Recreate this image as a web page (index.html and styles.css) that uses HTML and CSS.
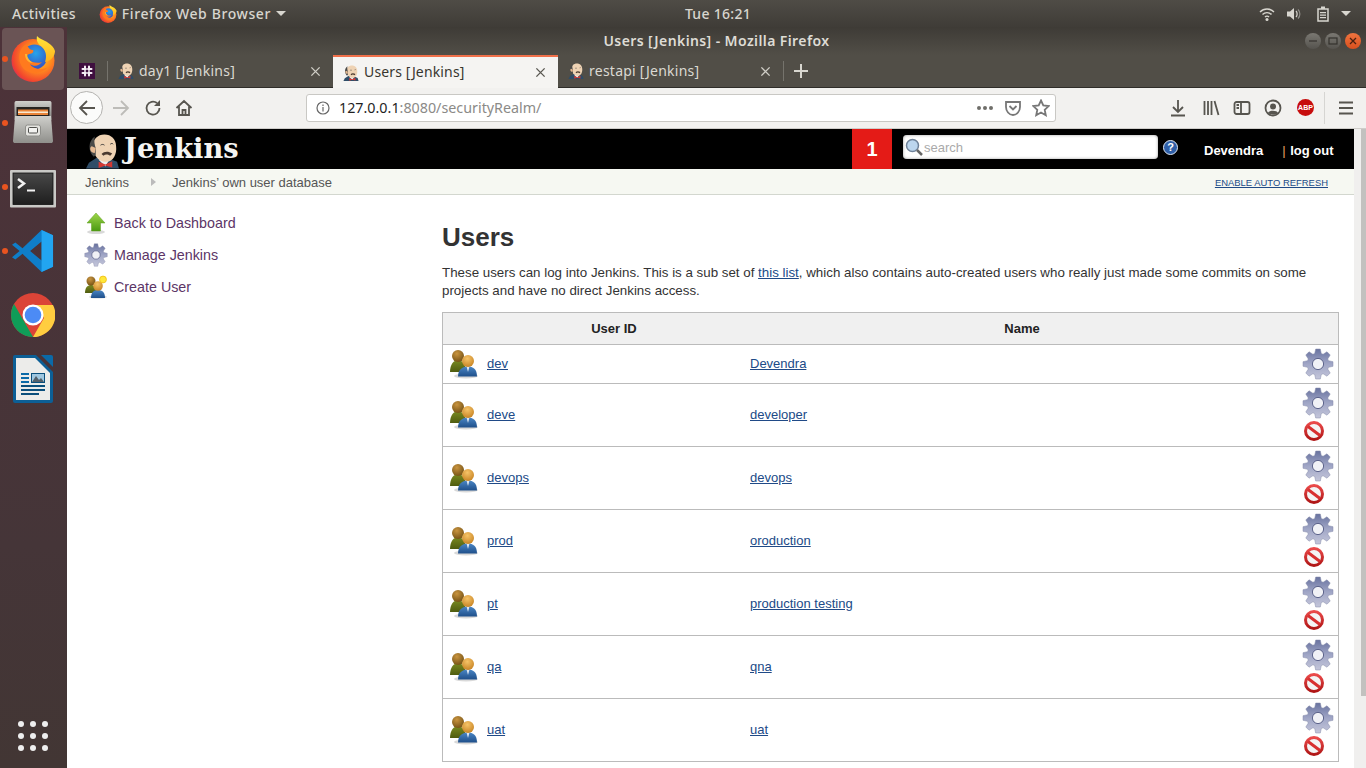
FILE: index.html
```html
<!DOCTYPE html>
<html lang="en">
<head>
<meta charset="utf-8">
<title>Users [Jenkins] - Mozilla Firefox</title>
<link rel="stylesheet" href="styles.css">
</head>
<body>
<svg class="defs" width="0" height="0" aria-hidden="true">
  <defs>
    <linearGradient id="gGear" x1="0" y1="0" x2="0" y2="1"><stop offset="0" stop-color="#68729f"/><stop offset=".5" stop-color="#a0a6c6"/><stop offset="1" stop-color="#c4c6da"/></linearGradient>
    <radialGradient id="gHeadB" cx=".4" cy=".3" r=".8"><stop offset="0" stop-color="#c9943f"/><stop offset="1" stop-color="#6d4c12"/></radialGradient>
    <radialGradient id="gHeadF" cx=".45" cy=".3" r=".8"><stop offset="0" stop-color="#f6c468"/><stop offset="1" stop-color="#c27c1c"/></radialGradient>
    <linearGradient id="gBlue" x1="0" y1="0" x2="0" y2="1"><stop offset="0" stop-color="#4a86c5"/><stop offset="1" stop-color="#1f4f8a"/></linearGradient>
    <linearGradient id="gOlive" x1="0" y1="0" x2="0" y2="1"><stop offset="0" stop-color="#7a8a20"/><stop offset="1" stop-color="#4f5c10"/></linearGradient>
    <linearGradient id="gArrow" x1="0" y1="0" x2="0" y2="1"><stop offset="0" stop-color="#9fd64a"/><stop offset="1" stop-color="#4b9a12"/></linearGradient>
    <linearGradient id="gStop" x1="0" y1="0" x2="0" y2="1"><stop offset="0" stop-color="#ea4a4a"/><stop offset="1" stop-color="#b01616"/></linearGradient>
    <radialGradient id="gFox" cx=".62" cy=".42" r=".72"><stop offset="0" stop-color="#ffd02a"/><stop offset=".45" stop-color="#ff8a1e"/><stop offset=".8" stop-color="#f2452e"/><stop offset="1" stop-color="#d0226a"/></radialGradient>
    <linearGradient id="gFlame" x1="0" y1="0" x2="0" y2="1"><stop offset="0" stop-color="#ffe53a"/><stop offset="1" stop-color="#ffb21c"/></linearGradient>
    <radialGradient id="gGlobe" cx=".55" cy=".35" r=".8"><stop offset="0" stop-color="#27a4ea"/><stop offset="1" stop-color="#3a3bb8"/></radialGradient>
    <linearGradient id="gCab" x1="0" y1="0" x2="0" y2="1"><stop offset="0" stop-color="#cfcfcb"/><stop offset="1" stop-color="#8f8f8b"/></linearGradient>
    <linearGradient id="gTop" x1="0" y1="0" x2="0" y2="1"><stop offset="0" stop-color="#cfcfcb"/><stop offset="1" stop-color="#7f7f7b"/></linearGradient>
    <linearGradient id="gTerm" x1="0" y1="0" x2="0" y2="1"><stop offset="0" stop-color="#484848"/><stop offset="1" stop-color="#1e1e1e"/></linearGradient>

    <symbol id="gear" viewBox="0 0 32 32">
      <path fill="url(#gGear)" stroke="#858aa8" stroke-width=".5" d="M12.7 5.5L13.7 1H18.3L19.3 5.5L21.09 6.25L24.97 3.77L28.23 7.03L25.75 10.91L26.5 12.7L31 13.7V18.3L26.5 19.3L25.75 21.09L28.23 24.97L24.97 28.23L21.09 25.75L19.3 26.5L18.3 31H13.7L12.7 26.5L10.91 25.75L7.03 28.23L3.77 24.97L6.25 21.09L5.5 19.3L1 18.3V13.7L5.5 12.7L6.25 10.91L3.77 7.03L7.03 3.77L10.91 6.25Z"/>
      <circle cx="16" cy="16" r="5.6" fill="#f0f1f6" stroke="#5d648c" stroke-width="1"/>
    </symbol>
    <symbol id="users" viewBox="0 0 32 32">
      <ellipse cx="18" cy="28" rx="12" ry="2.4" fill="#000" opacity=".15"/>
      <path fill="url(#gOlive)" d="M2 24C2 16 6 12 10 12C14 12 18 16 18 24Z"/>
      <circle cx="10" cy="8" r="6" fill="url(#gHeadB)"/>
      <path fill="url(#gBlue)" d="M10 28.500C10 21 15 18.500 20 18.500C25 18.500 29 21 29 28.500Z"/>
      <path fill="#dfe8f2" d="M18.500 18.500H21.500L20 24Z"/>
      <circle cx="20" cy="13" r="6" fill="url(#gHeadF)"/>
    </symbol>
    <symbol id="stop" viewBox="0 0 24 24">
      <circle cx="12" cy="12" r="8.500" fill="#f4f4f4" stroke="url(#gStop)" stroke-width="3"/>
      <path d="M6 7.500L18 16.500" stroke="#d83030" stroke-width="3"/>
    </symbol>
    <symbol id="arrowup" viewBox="0 0 24 24">
      <ellipse cx="12" cy="21" rx="9" ry="2" fill="#000" opacity=".15"/>
      <path fill="url(#gArrow)" stroke="#5f9e1e" stroke-width=".5" d="M12 2L21 12H16.5V20H7.5V12H3Z"/>
    </symbol>
    <symbol id="usernew" viewBox="0 0 24 24">
      <ellipse cx="14" cy="22" rx="9" ry="1.600" fill="#000" opacity=".15"/>
      <path fill="url(#gOlive)" d="M1 18C1 12 4 10 7 10C10 10 13 12 13 18Z"/>
      <circle cx="7" cy="6" r="4.500" fill="url(#gHeadB)"/>
      <path fill="url(#gBlue)" d="M7 23C7 17 10 15 14 15C18 15 21 17 21 23Z"/>
      <circle cx="14" cy="11" r="4.800" fill="url(#gHeadF)"/>
      <circle cx="19" cy="4.500" r="3.400" fill="#ffe83a" stroke="#f3c51e" stroke-width="1"/>
    </symbol>
    <symbol id="butler" viewBox="0 0 34 36">
      <path fill="#2f4d68" d="M0 36L3 30L11 25L24 26L32 29L34 36Z"/>
      <path fill="#eee" d="M13 27L20 34L24 27Z"/>
      <path fill="#d33833" d="M13 29L20 32L27 28.500L27 35L20 33L13 35.500Z"/>
      <path fill="#efd3b4" d="M7 13C7 6 12 1 19 1C26 1 31 6 31 13C32 21 28 29 21 29C15 29 11 26 9 21Z"/>
      <path fill="#4a4a48" d="M8 24C2 18 2 8 9 3C8 8 9 12 10 15L10 22Z"/>
      <path fill="#e5b992" d="M6 13C3 14 4 20 9 20L10 15Z"/>
      <path fill="none" stroke="#333" stroke-width="1" d="M15 12C16 11 18 11 19 12M25 11C26 10 27.500 10 28 11"/>
      <path fill="#4a3a30" d="M16 21C19 18 23 18 27 20.500L25 23C22 21 20 21 18 23Z"/>
    </symbol>
    <symbol id="firefox" viewBox="0 0 44 46">
      <circle cx="22" cy="24.500" r="21.500" fill="url(#gFox)"/>
      <circle cx="23.500" cy="21" r="12.500" fill="url(#gGlobe)"/>
      <path fill="url(#gFlame)" d="M26 0C25 5 27 8 31 11C35 15 36 20 34 26C40 25 44 20 44 15C42 8 34 5 30 3C28 2 27 1 26 0Z"/>
      <path fill="#ff7a1e" d="M16 8C13 9 10 12 9 16C7 22 9 30 14 34C21 39 31 38 37 31C31 35 22 33 19 28C23 31 28 30 31 26C26 28 21 26 17 24C15 22 16 19 18 18C22 18 23 15 22 14C19 14 17 12 16 8Z"/>
      <path fill="#ffb533" d="M14 18C14 24 18 27 22 27C19 25 16 22 16 18Z"/>
    </symbol>
    <symbol id="slack" viewBox="0 0 16 16">
      <rect width="16" height="16" fill="#3f0f3f"/>
      <path stroke="#f4eef4" stroke-width="2" stroke-linecap="round" fill="none" d="M6 3.500V7M10 9V12.500M3.500 10H7M9 6H12.500M10 3.500V7M6 9V12.500M3.500 6H7M9 10H12.500"/>
    </symbol>
  </defs>
</svg>

<div class="screen">
  <header class="topbar">
    <div class="topbar-left">
      <span class="top-label">Activities</span>
      <span class="top-app">
        <svg class="ic18"><use href="#firefox"/></svg>
        <span class="top-label top-label-wide">Firefox Web Browser</span>
        <span class="caret"></span>
      </span>
    </div>
    <div class="clock">Tue 16:21</div>
    <div class="tray">
      <svg class="tray-ic" viewBox="0 0 16 16"><path fill="none" stroke="#d8d6cf" stroke-width="1.400" d="M1 6C5 2 11 2 15 6M3.500 8.500C6 6 10 6 12.500 8.500M6 11C7 10 9 10 10 11"/><circle cx="8" cy="13.500" r="1.500" fill="#d8d6cf"/></svg>
      <svg class="tray-ic" viewBox="0 0 16 16"><path fill="#d8d6cf" d="M1 5.500H4L8 2V14L4 10.500H1Z"/><path fill="none" stroke="#d8d6cf" stroke-width="1.200" d="M10 5C11.500 6.500 11.500 9.500 10 11"/><path fill="none" stroke="#8f8d87" stroke-width="1.200" d="M12 3.500C14.500 6 14.500 10 12 12.500"/></svg>
      <svg class="tray-ic tray-batt" viewBox="0 0 16 16"><path fill="none" stroke="#d8d6cf" stroke-width="1.500" d="M3 3H13V15H3Z"/><path fill="#d8d6cf" d="M6 .5H10V3H6ZM5 6H11V7.200H5ZM5 8.500H11V9.700H5ZM5 11H11V12.200H5Z"/></svg>
      <span class="caret"></span>
    </div>
  </header>

  <div class="desk">
    <nav class="dock">
      <div class="dock-item dock-active"><span class="dot"></span>
        <svg class="ic-dock"><use href="#firefox"/></svg>
      </div>
      <div class="dock-item"><span class="dot"></span>
        <svg class="ic-dock" viewBox="0 0 44 46">
          <path fill="url(#gTop)" d="M3.500 3C3.500 2 4 1 5 1H39C40 1 40.500 2 40.500 3V20H3.500Z"/>
          <path fill="#262320" d="M5.500 7H38.500V18H5.500Z"/>
          <path fill="#e8843a" d="M7 9.500H37V15H7Z"/><path fill="#f8e8d0" d="M7 11.500H37V13H7Z"/>
          <path fill="url(#gCab)" d="M4 16H40L42 41C42 42.500 41 43 40 43H4C3 43 2 42.500 2 41Z"/>
          <rect x="14.500" y="25" width="15" height="11" rx="2" fill="#e4e4e0" stroke="#8f8f8b"/><rect x="17.500" y="27.500" width="9" height="5.500" rx="1" fill="#f2f2f0" stroke="#4f4f4c"/>
        </svg>
      </div>
      <div class="dock-item"><span class="dot"></span>
        <svg class="ic-term" viewBox="0 0 46 38">
          <rect x="0" y="0" width="46" height="37.500" rx="1" fill="#c9c9c6"/><rect x="3" y="3" width="40" height="31.500" fill="url(#gTerm)" stroke="#111" stroke-width=".8"/>
          <path fill="none" stroke="#f2f2f2" stroke-width="2.500" d="M8 9L14 13.500L8 18"/><path stroke="#f2f2f2" stroke-width="2" d="M17 20.500H25"/>
        </svg>
      </div>
      <div class="dock-item"><span class="dot"></span>
        <svg class="ic-code" viewBox="0 0 44 46">
          <path fill="#0f7ec9" d="M31 1L43 6.500V39.500L31 45L11 26L3.500 32L0 29.500L8 23L0 16.500L3.500 14L11 20ZM31 13L19 23L31 33Z"/>
          <path fill="#22a5f1" d="M31 1L43 6.500V39.500L31 45Z"/>
        </svg>
      </div>
      <div class="dock-item">
        <svg class="ic-dock" viewBox="0 0 44 46">
          <g transform="translate(0 1)">
          <circle cx="22" cy="22" r="22" fill="#db4437"/>
          <path fill="#0f9d58" d="M22 44A22 22 0 0 1 3 11L14 30L22 44Z"/>
          <path fill="#ffcd40" d="M22 44L33 25L22 12H42A22 22 0 0 1 22 44Z"/>
          <circle cx="22" cy="22" r="10.500" fill="#fff"/><circle cx="22" cy="22" r="8.300" fill="#4c8bf5"/>
          </g>
        </svg>
      </div>
      <div class="dock-item">
        <svg class="ic-writer" viewBox="0 0 40 48">
          <path fill="#0b6aa8" d="M28 0H38A2 2 0 0 1 40 2V12Z"/>
          <path fill="#0c5f96" d="M2 0H23L40 17V46A2 2 0 0 1 38 48H2A2 2 0 0 1 0 46V2A2 2 0 0 1 2 0Z"/>
          <path fill="#ececea" d="M3 3H22L37 18V45H3Z"/>
          <path fill="#0b6aa8" d="M8 18H16V20H8ZM8 22H16V24H8ZM8 26H16V28H8Z"/>
          <path fill="#0b4f7c" d="M8 30H32V32H8ZM8 34H32V36H8ZM8 38H26V40H8Z"/>
          <rect x="18" y="18" width="14" height="10" fill="#0b4f7c"/><rect x="19" y="19" width="12" height="8" fill="#9fc7e0"/><path fill="#54606a" d="M19 27L23 21L26 25L28 23L31 27Z"/>
        </svg>
      </div>
      <div class="apps">
        <i></i><i></i><i></i><i></i><i></i><i></i><i></i><i></i><i></i>
      </div>
    </nav>

    <main class="window">
      <div class="titlebar">
        <span class="wintitle">Users [Jenkins] - Mozilla Firefox</span>
        <div class="winbtns">
          <span class="winbtn"><svg viewBox="0 0 16 16"><path stroke="#34322e" stroke-width="1.200" d="M4 8H12"/></svg></span>
          <span class="winbtn"><svg viewBox="0 0 16 16"><rect x="4" y="5" width="8" height="6" fill="none" stroke="#34322e" stroke-width="1.200"/></svg></span>
          <span class="winbtn winbtn-close"><svg viewBox="0 0 16 16"><path stroke="#4a2010" stroke-width="1.300" d="M5 5L11 11M11 5L5 11"/></svg></span>
        </div>
      </div>

      <div class="tabbar">
        <span class="pinned"><svg class="ic16"><use href="#slack"/></svg></span>
        <span class="tabsep"></span>
        <div class="tab">
          <svg class="ic16"><use href="#butler"/></svg>
          <span class="tab-text">day1 [Jenkins]</span>
          <svg class="tab-x" viewBox="0 0 12 12"><path d="M1.500 1.500L10.500 10.500M10.500 1.500L1.500 10.500"/></svg>
        </div>
        <div class="tab tab-active">
          <svg class="ic16"><use href="#butler"/></svg>
          <span class="tab-text">Users [Jenkins]</span>
          <svg class="tab-x" viewBox="0 0 12 12"><path d="M1.500 1.500L10.500 10.500M10.500 1.500L1.500 10.500"/></svg>
        </div>
        <div class="tab">
          <svg class="ic16"><use href="#butler"/></svg>
          <span class="tab-text">restapi [Jenkins]</span>
          <svg class="tab-x" viewBox="0 0 12 12"><path d="M1.500 1.500L10.500 10.500M10.500 1.500L1.500 10.500"/></svg>
        </div>
        <span class="tabsep"></span>
        <svg class="tab-plus" viewBox="0 0 14 14"><path d="M7 0V14M0 7H14"/></svg>
      </div>

      <div class="navbar">
        <span class="backbtn"><svg class="nav-ic" viewBox="0 0 18 18"><path d="M17 9H2M9 2L2 9L9 16"/></svg></span>
        <svg class="nav-ic nav-fwd" viewBox="0 0 18 18"><path d="M1 9H16M9 2L16 9L9 16"/></svg>
        <svg class="nav-ic nav-reload" viewBox="0 0 18 18"><path d="M15.500 9A6.500 6.500 0 1 1 13 4"/><path class="solid" d="M16 1V7H10Z"/></svg>
        <svg class="nav-ic nav-home" viewBox="0 0 18 18"><path d="M1.500 9L9 2L16.500 9M4 7.500V16H14V7.500M7.500 16V11H10.500V16"/></svg>
        <div class="urlbar">
          <svg class="url-info" viewBox="0 0 14 14"><circle cx="7" cy="7" r="6"/><path d="M7 6V10.500M7 3.500V5"/></svg>
          <span class="url"><span class="url-host">127.0.0.1</span>:8080/securityRealm/</span>
          <span class="url-dots"><i></i><i></i><i></i></span>
          <svg class="nav-ic url-pocket" viewBox="0 0 18 18"><path d="M2 3H16V8C16 12 13 16 9 16C5 16 2 12 2 8ZM5.500 7L9 10.500L12.500 7"/></svg>
          <svg class="nav-ic url-star" viewBox="0 0 18 18"><path d="M9 1.500L11.300 6.500L16.700 7.100L12.700 10.800L13.800 16.200L9 13.500L4.200 16.200L5.300 10.800L1.300 7.100L6.700 6.500Z"/></svg>
        </div>
        <svg class="nav-ic tool-dl" viewBox="0 0 18 18"><path d="M9 1V12M4 8L9 13L14 8M2 16.500H16"/></svg>
        <svg class="nav-ic tool" viewBox="0 0 18 18"><path d="M2.500 2V16M6 2V16M9.500 2V16M12.500 2L16.500 16"/></svg>
        <svg class="nav-ic tool" viewBox="0 0 18 18"><rect x="1.500" y="3" width="15" height="12" rx="2"/><path d="M8 3V15M3.500 6H6M3.500 9H6"/></svg>
        <svg class="nav-ic tool" viewBox="0 0 18 18"><circle cx="9" cy="9" r="7.500"/><circle class="solid" cx="9" cy="7.500" r="3"/><path class="solid" d="M4 14C5 11 13 11 14 14C12 16 6 16 4 14Z"/></svg>
        <span class="abp">ABP</span>
        <span class="toolsep"></span>
        <svg class="nav-ic tool-menu" viewBox="0 0 18 18"><path d="M2 3.500H16M2 9H16M2 14.500H16"/></svg>
      </div>

      <div class="viewport">
        <div class="page">
          <div class="jk-header">
            <div class="jk-logo">
              <svg class="jk-butler"><use href="#butler"/></svg>
              <span class="jk-word">Jenkins</span>
            </div>
            <span class="jk-badge">1</span>
            <div class="jk-search">
              <svg class="jk-mag" viewBox="0 0 18 18"><circle cx="7.500" cy="7.500" r="6" fill="#bcd6ee" stroke="#6f8299" stroke-width="1.500"/><path stroke="#666" stroke-width="2.500" d="M12 12L17 17"/></svg>
              <input class="jk-input" type="text" placeholder="search">
            </div>
            <span class="jk-help">?</span>
            <span class="jk-user">Devendra</span>
            <span class="jk-logout"><span class="jk-pipe">|</span> log out</span>
          </div>
          <div class="crumbs">
            <span>Jenkins</span>
            <span class="crumb-arrow"></span>
            <span>Jenkins’ own user database</span>
            <a class="autorefresh" href="#">ENABLE AUTO REFRESH</a>
          </div>
          <div class="content">
            <aside class="tasks">
              <a class="task" href="#"><svg class="ic24"><use href="#arrowup"/></svg>Back to Dashboard</a>
              <a class="task" href="#"><svg class="ic24"><use href="#gear"/></svg>Manage Jenkins</a>
              <a class="task" href="#"><svg class="ic24"><use href="#usernew"/></svg>Create User</a>
            </aside>
            <section class="main">
              <h1>Users</h1>
              <p>These users can log into Jenkins. This is a sub set of <a href="#">this list</a>, which also contains auto-created users who really just made some commits on some projects and have no direct Jenkins access.</p>
              <table class="users">
                <colgroup><col class="c1"><col class="c2"><col class="c3"><col class="c4"></colgroup>
                <thead><tr><th></th><th>User ID</th><th>Name</th><th></th></tr></thead>
                <tbody>
                  <tr><td class="ti"><svg class="ic32"><use href="#users"/></svg></td><td class="tu"><a href="#">dev</a></td><td class="tn"><a href="#">Devendra</a></td><td class="ta"><svg class="ic32"><use href="#gear"/></svg></td></tr>
                  <tr><td class="ti"><svg class="ic32"><use href="#users"/></svg></td><td class="tu"><a href="#">deve</a></td><td class="tn"><a href="#">developer</a></td><td class="ta"><svg class="ic32"><use href="#gear"/></svg><svg class="ic24"><use href="#stop"/></svg></td></tr>
                  <tr><td class="ti"><svg class="ic32"><use href="#users"/></svg></td><td class="tu"><a href="#">devops</a></td><td class="tn"><a href="#">devops</a></td><td class="ta"><svg class="ic32"><use href="#gear"/></svg><svg class="ic24"><use href="#stop"/></svg></td></tr>
                  <tr><td class="ti"><svg class="ic32"><use href="#users"/></svg></td><td class="tu"><a href="#">prod</a></td><td class="tn"><a href="#">oroduction</a></td><td class="ta"><svg class="ic32"><use href="#gear"/></svg><svg class="ic24"><use href="#stop"/></svg></td></tr>
                  <tr><td class="ti"><svg class="ic32"><use href="#users"/></svg></td><td class="tu"><a href="#">pt</a></td><td class="tn"><a href="#">production testing</a></td><td class="ta"><svg class="ic32"><use href="#gear"/></svg><svg class="ic24"><use href="#stop"/></svg></td></tr>
                  <tr><td class="ti"><svg class="ic32"><use href="#users"/></svg></td><td class="tu"><a href="#">qa</a></td><td class="tn"><a href="#">qna</a></td><td class="ta"><svg class="ic32"><use href="#gear"/></svg><svg class="ic24"><use href="#stop"/></svg></td></tr>
                  <tr><td class="ti"><svg class="ic32"><use href="#users"/></svg></td><td class="tu"><a href="#">uat</a></td><td class="tn"><a href="#">uat</a></td><td class="ta"><svg class="ic32"><use href="#gear"/></svg><svg class="ic24"><use href="#stop"/></svg></td></tr>
                </tbody>
              </table>
            </section>
          </div>
        </div>
        <div class="scrollbar"><div class="thumb"></div></div>
      </div>
    </main>
  </div>
</div>
</body>
</html>
```
FILE: styles.css
```css
* { box-sizing: border-box; }
html, body { margin: 0; height: 768px; overflow: hidden; }
body { font-family: "Liberation Sans", Arial, sans-serif; font-size: 13px; color: #333; }
.defs { display: block; height: 0; }
.screen { width: 1366px; height: 768px; display: flex; flex-direction: column; overflow: hidden; }

/* GNOME top bar */
.topbar { height: 27px; flex: none; display: grid; grid-template-columns: 1fr auto 1fr; align-items: center; padding: 0 6px 0 12px; background: linear-gradient(#4f4c46, #3f3c37); font-family: "Noto Sans", sans-serif; font-size: 14px; font-weight: 500; color: #d8d6cf; }
.topbar-left { display: flex; align-items: center; gap: 23px; }
.top-app { display: flex; align-items: center; gap: 5px; }
.top-label { letter-spacing: .35px; }
.top-label-wide { letter-spacing: .6px; }
.ic18 { width: 18px; height: 18px; }
.caret { display: inline-block; width: 0; height: 0; border: 5px solid transparent; border-top: 5px solid #d8d6cf; border-bottom: 0; margin-left: 0; }
.clock { letter-spacing: .3px; margin-left: 64px; }
.tray { display: flex; justify-content: flex-end; align-items: center; gap: 11px; padding-right: 9px; }
.tray-ic { width: 16px; height: 16px; }
.tray-batt { margin-left: 2px; }
.tray .caret { margin-left: -1px; }

.desk { flex: 1; display: flex; min-height: 0; }

/* Dock */
.dock { width: 67px; flex: none; display: flex; flex-direction: column; align-items: flex-start; background: linear-gradient(#4d3239, #453538 70%, #423634); padding: 1px 0 0 2px; position: relative; }
.dock-item { width: 62px; height: 64px; flex: none; display: flex; align-items: center; justify-content: center; position: relative; }
.dock-active { background: #6a5455; border-radius: 4px; height: 62px; margin-bottom: 1px; }
.dot { position: absolute; left: 0; top: 29px; width: 6px; height: 6px; border-radius: 50%; background: #e95420; }
.dock-active .dot { top: 28px; }
.ic-dock { width: 44px; height: 46px; }
.ic-term { width: 46px; height: 38px; margin-top: 3px; }
.ic-code { width: 42px; height: 44px; }
.ic-writer { width: 40px; height: 48px; }
.apps { margin: auto 0 17px 16px; display: grid; grid-template-columns: repeat(3, 6px); gap: 6px; }
.apps i { width: 6px; height: 6px; border-radius: 50%; background: #eee; }

/* Window */
.window { flex: 1; min-width: 0; display: flex; flex-direction: column; }
.titlebar { height: 28px; flex: none; display: flex; align-items: center; justify-content: center; position: relative; background: linear-gradient(#3e3b36, #514e47); }
.wintitle { font-family: "Noto Sans", sans-serif; font-size: 14px; font-weight: 600; letter-spacing: .4px; color: #dedcd5; margin-top: -2px; }
.winbtns { position: absolute; right: 5px; top: 6px; display: flex; gap: 4px; }
.winbtn { width: 16px; height: 16px; border-radius: 50%; background: linear-gradient(#7a7872, #55534e); display: block; }
.winbtn svg { display: block; width: 16px; height: 16px; }
.winbtn-close { background: linear-gradient(#f0743f, #d9501e); }

.tabbar { height: 33px; flex: none; display: flex; align-items: flex-end; background: #514e47; border-bottom: 1px solid #2f2d29; font-family: "Noto Sans", sans-serif; font-size: 14px; color: #dbd9d2; }
.pinned { width: 40px; height: 32px; padding-left: 12px; display: flex; align-items: center; flex: none; }
.ic16 { width: 16px; height: 16px; flex: none; display: block; }
.tabsep { width: 1px; height: 20px; background: #75736c; margin-bottom: 6px; flex: none; }
.tab { width: 225px; height: 32px; flex: none; display: flex; align-items: center; padding: 0 12px 0 10px; gap: 5px; }
.tab-text { flex: 1; white-space: nowrap; letter-spacing: .25px; margin-top: -2px; }
.tab-x { width: 11px; height: 11px; stroke: #cfcdc6; stroke-width: 1.500; fill: none; flex: none; }
.tab-active { height: 33px; margin-bottom: -1px; background: #f5f4f2; color: #38362f; border-top: 2px solid #f0704a; }
.tab-active .tab-text { margin-top: -2px; letter-spacing: .15px; }
.tab-active .tab-x { stroke: #5a5852; }
.tab-plus { width: 14px; height: 14px; margin: 0 0 9px 10px; stroke: #d8d6cf; stroke-width: 2; flex: none; }

.navbar { height: 41px; flex: none; display: flex; align-items: center; background: #f2f1ef; border-bottom: 1px solid #cfcdca; padding-left: 3px; padding-bottom: 1px; }
.nav-ic { width: 18px; height: 18px; fill: none; stroke: #57554f; stroke-width: 1.800; flex: none; }
.nav-ic .solid { fill: #57554f; stroke: none; }
.backbtn { width: 33px; height: 33px; border-radius: 50%; border: 1px solid #b4b3b0; background: #fbfbfa; display: flex; align-items: center; justify-content: center; flex: none; }
.nav-fwd { margin-left: 9px; stroke: #bdbcb8; }
.nav-reload { margin-left: 14px; }
.nav-home { margin-left: 13px; }
.urlbar { width: 750px; height: 28px; margin-left: 113px; flex: none; display: flex; align-items: center; background: #fff; border: 1px solid #c9c8c4; border-radius: 3px; padding: 0 5px 0 9px; }
.url-info { width: 14px; height: 14px; fill: none; stroke: #666; stroke-width: 1.200; flex: none; }
.url { margin-left: 9px; flex: 1; font-family: "Noto Sans", sans-serif; font-size: 14.300px; color: #8b8a87; white-space: nowrap; }
.url-host { color: #1f1f1f; }
.url-dots { display: flex; gap: 2px; margin-right: 11px; }
.url-dots i { width: 4px; height: 4px; border-radius: 50%; background: #6f6e6a; }
.url-pocket { margin-right: 10px; stroke: #777; }
.url-star { stroke: #777; }
.tool-dl { margin-left: 113px; }
.tool { margin-left: 13px; }
.tool-dl + .tool { margin-left: 15px; }
.abp { width: 17px; height: 17px; margin-left: 15px; border-radius: 50%; background: #c70d0d; color: #fff; font-size: 7px; font-weight: 700; line-height: 17px; text-align: center; flex: none; }
.toolsep { width: 1px; height: 32px; background: #d6d5d2; margin-left: 10px; flex: none; }
.tool-menu { margin-left: 12px; }

.viewport { flex: 1; min-height: 0; display: flex; background: #fff; }
.page { flex: 1; min-width: 0; display: flex; flex-direction: column; overflow: hidden; }
.scrollbar { width: 12px; flex: none; background: #f0efee; display: flex; justify-content: flex-end; }
.thumb { width: 5px; height: 567px; background: #c2c1bf; }

/* Jenkins header */
.jk-header { height: 40px; flex: none; display: flex; align-items: center; background: #000; color: #fff; font-weight: 700; }
.jk-logo { display: flex; align-items: flex-end; height: 40px; padding-left: 19px; width: 785px; flex: none; }
.jk-butler { width: 33px; height: 36px; flex: none; display: block; }
.jk-word { font-family: "DejaVu Serif", serif; font-size: 27.300px; line-height: 38px; margin-left: 5px; color: #f4f4f2; align-self: flex-start; }
.jk-badge { width: 40px; height: 40px; background: #e41b17; font-size: 20px; line-height: 40px; text-align: center; flex: none; }
.jk-search { width: 255px; height: 24px; margin-left: 11px; margin-bottom: 4px; background: #fff; border-radius: 4px; box-shadow: inset 0 0 3px #999; display: flex; align-items: center; padding-left: 2px; flex: none; }
.jk-mag { width: 18px; height: 18px; flex: none; }
.jk-input { border: 0; outline: 0; background: transparent; flex: 1; min-width: 0; padding: 0 0 0 1px; font: 13px "Liberation Sans", Arial, sans-serif; color: #333; }
.jk-input::placeholder { color: #aaa; opacity: 1; }
.jk-help { width: 15px; height: 15px; margin-left: 5px; margin-bottom: 4px; border-radius: 50%; background: #2f5fa8; border: 1.500px solid #dfe8f4; font-size: 11px; line-height: 13px; text-align: center; flex: none; }
.jk-user { margin-left: 26px; margin-top: 3px; flex: none; }
.jk-logout { margin-left: 19px; margin-top: 3px; flex: none; }
.jk-pipe { color: #e8a060; font-weight: 400; margin-right: 1px; }

.crumbs { height: 26px; flex: none; display: flex; align-items: center; padding: 1px 26px 0 18px; background: #f6f8f2; border-bottom: 1px solid #d3d7cf; color: #555; }
.crumb-arrow { width: 0; height: 0; border: 4px solid transparent; border-left: 5px solid #bbb; border-right: 0; margin: 0 16px 0 22px; }
.autorefresh { margin-left: auto; font-size: 9.450px; color: #204a87; }

.content { flex: 1; display: flex; min-height: 0; }
.tasks { width: 375px; flex: none; padding: 12px 0 0 17px; display: flex; flex-direction: column; }
.task { height: 32px; display: flex; align-items: center; gap: 6px; font-size: 14.300px; color: #5c3566; text-decoration: none; }
.ic24 { width: 24px; height: 24px; flex: none; display: block; }
.ic32 { width: 32px; height: 32px; flex: none; display: block; }

.main { flex: 1; min-width: 0; padding-right: 15px; }
.main h1 { margin: 27px 0 0; font-size: 26px; line-height: 30px; font-weight: 700; color: #333; }
.main p { margin: 12px 0 0; font-size: 13.330px; line-height: 18px; }
a { color: #204a87; }
.users { width: 897px; margin-top: 12px; border-collapse: separate; border-spacing: 0; table-layout: fixed; border: 1px solid #bbb; border-bottom: 0; font-size: 13px; }
.c1 { width: 38px; } .c2 { width: 266px; } .c3 { width: 550px; } .c4 { width: 41px; }
.users th { height: 32px; padding: 0; background: #f0f0f0; border-bottom: 1px solid #bbb; font-weight: 700; color: #222; text-align: center; }
.users td { padding: 0; border-bottom: 1px solid #bbb; vertical-align: middle; }
.users .ti { padding: 0 0 1px 5px; }
.users .tu { padding: 0 0 2px 6px; }
.users .tn { padding: 0 0 2px 3px; }
.users .ta { padding: 3px 0 3px 5px; }
```
